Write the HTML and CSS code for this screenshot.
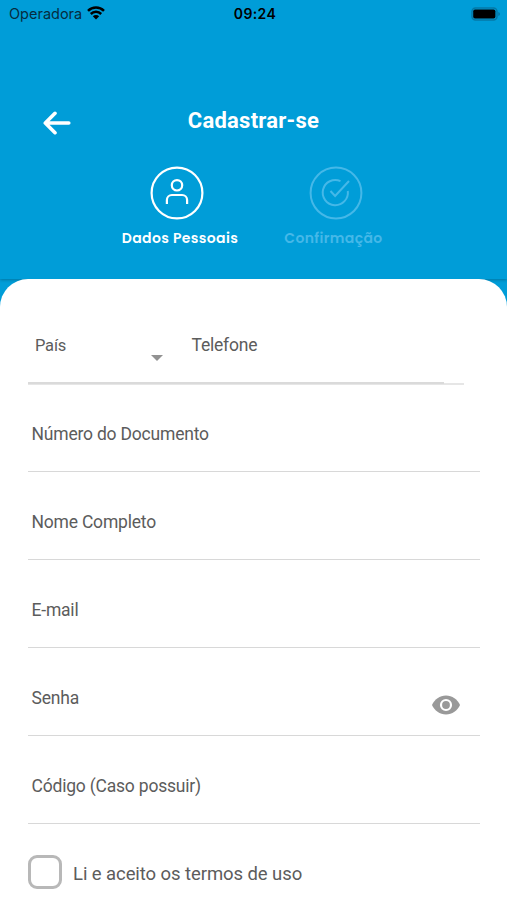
FILE: index.html
```html
<!DOCTYPE html>
<html lang="pt-BR">

<head>
  <meta charset="utf-8">
  <meta name="viewport" content="width=device-width, initial-scale=1">
  <title>Cadastrar-se</title>
  <link rel="stylesheet" href="styles.css">
</head>

<body>
  <header class="header">
    <div class="status-bar">
      <div class="carrier">
        <span class="carrier-name">Operadora</span>
        <svg class="wifi" viewBox="0 0 18 14" width="18" height="14">
          <path d="M1 4.800a11.300 11.300 0 0 1 16 0M3.800 8a7.300 7.300 0 0 1 10.400 0" fill="none" stroke="#000" stroke-width="2.500"/>
          <path d="M9 13.400L5.800 10.200a4.600 4.600 0 0 1 6.400 0z" fill="#000"/>
        </svg>
      </div>
      <span class="time">09:24</span>
      <svg class="battery" viewBox="0 0 30 14" width="30" height="14">
        <rect x="1" y="1" width="25" height="12" rx="3.500" fill="none" stroke="#0478a6" stroke-width="1.500"/>
        <rect x="2.200" y="2.500" width="22.200" height="9" rx="1.800" fill="#000"/>
        <path d="M27.500 5v4c1.600-.5 1.600-3.500 0-4z" fill="#04658d"/>
      </svg>
    </div>

    <div class="nav">
      <a class="back" href="#" aria-label="Voltar">
        <svg viewBox="0 0 28 24" width="28" height="24">
          <path d="M25.800 12H2.500M12 2.300L2.300 12l9.700 9.700" fill="none" stroke="#fff" stroke-width="3.600" stroke-linecap="round" stroke-linejoin="round"/>
        </svg>
      </a>
      <h1 class="title">Cadastrar-se</h1>
    </div>

    <div class="steps">
      <div class="step">
        <svg viewBox="0 0 54 54" width="54" height="54" fill="none" stroke="currentColor" stroke-width="2.200">
          <circle cx="27" cy="27" r="25.400"/>
          <circle cx="27" cy="19.300" r="5.200"/>
          <path d="M16.900 38v-4a5 5 0 0 1 5-5h10.200a5 5 0 0 1 5 5v4"/>
        </svg>
        <span class="step-label">Dados Pessoais</span>
      </div>
      <div class="step step-off">
        <svg viewBox="0 0 54 54" width="54" height="54" fill="none" stroke="currentColor" stroke-width="2">
          <circle cx="27" cy="27" r="25.400"/>
          <path d="M31.500 15.100A12.600 12.600 0 1 0 38.800 25"/>
          <path d="M21.500 25l4.600 5L40 15"/>
        </svg>
        <span class="step-label">Confirmação</span>
      </div>
    </div>
  </header>

  <main class="card">
    <form class="form">
      <div class="phone-row">
        <div class="phone-inner">
          <div class="country">
            <span class="country-label">País</span>
            <i class="caret"></i>
          </div>
          <span>Telefone</span>
        </div>
      </div>
      <div class="field">Número do Documento</div>
      <div class="field">Nome Completo</div>
      <div class="field">E-mail</div>
      <div class="field">
        <span>Senha</span>
        <svg class="eye" viewBox="0 0 28 20" width="28" height="20">
          <path d="M14 .5C7.800.5 2.400 4.400 0 10c2.400 5.600 7.800 9.500 14 9.500S25.600 15.600 28 10C25.600 4.400 20.200.5 14 .5z" fill="#999"/>
          <circle cx="14" cy="10" r="5" fill="#999" stroke="#fff" stroke-width="2.200"/>
        </svg>
      </div>
      <div class="field">Código (Caso possuir)</div>
      <label class="terms">
        <input class="check" type="checkbox">
        <span>Li e aceito os termos de uso</span>
      </label>
    </form>
  </main>
</body>

</html>
```
FILE: styles.css
```css
* {
  box-sizing: border-box;
}

body {
  margin: 0;
  height: 900px;
  overflow: hidden;
  background: #009dd8;
  font-family: Roboto, "Liberation Sans", sans-serif;
  color: #5c5c5c;
}

.header {
  height: 279px;
  color: #fff;
  box-shadow: 0 1px 3px rgba(0, 0, 0, 0.25);
}

.status-bar {
  display: grid;
  grid-template-columns: 1fr auto 1fr;
  align-items: center;
  height: 27px;
  padding: 0 6px 0 9px;
  font-family: Inter, sans-serif;
  font-size: 14px;
  color: #000;
}

.carrier {
  display: flex;
  align-items: center;
  gap: 5px;
}

.carrier-name {
  color: #062c40;
  font-size: 14.5px;
}

.wifi {
  margin-top: -2px;
}

.time {
  font-weight: 600;
  letter-spacing: 0.4px;
}

.battery {
  justify-self: end;
}

.nav {
  display: grid;
  grid-template-columns: 1fr auto 1fr;
  align-items: center;
  height: 56px;
  margin-top: 66px;
  padding: 0 43px;
}

.back {
  height: 24px;
  margin-top: 4px;
}

.title {
  margin: 0;
  font-size: 22px;
  line-height: 28px;
  font-weight: 700;
  letter-spacing: 0.25px;
}

.steps {
  display: flex;
  justify-content: center;
  gap: 40px;
  margin-top: 17px;
  padding-left: 6px;
}

.step {
  display: flex;
  flex-direction: column;
  align-items: center;
  width: 119px;
}

.step-off {
  color: #45b8e8;
}

.step-label {
  margin-top: 8px;
  padding-left: 6px;
  font-family: Poppins, Inter, sans-serif;
  font-size: 14px;
  line-height: 20px;
  font-weight: 600;
  letter-spacing: 0.36px;
  white-space: nowrap;
}

.step-off .step-label {
  padding: 0 5px 0 0;
}

.card {
  position: relative;
  height: 621px;
  padding: 0 27px 0 28px;
  border-radius: 28px 28px 0 0;
  background: #fff;
}

.form {
  display: flex;
  flex-direction: column;
  font-size: 17.5px;
  line-height: 22px;
  letter-spacing: -0.2px;
}

.phone-row {
  width: 436px;
  height: 106px;
  border-bottom: 2px solid #e6e6e6;
}

.phone-inner {
  display: flex;
  width: 416px;
  height: 105px;
  padding-top: 55px;
  border-bottom: 2px solid #dadada;
}

.country {
  display: flex;
  justify-content: space-between;
  width: 135px;
  margin-right: 28.5px;
  padding-left: 7px;
  font-size: 16.5px;
}

.country-label {
  margin-top: 1px;
}

.caret {
  width: 12px;
  height: 6px;
  margin-top: 21px;
  background: #929292;
  clip-path: polygon(0 0, 100% 0, 50% 100%);
}

.field {
  display: flex;
  justify-content: space-between;
  height: 88px;
  padding: 39px 20px 0 3.5px;
  border-bottom: 1px solid #d8d8d8;
}

.phone-row + .field {
  height: 87px;
  padding-top: 38px;
}

.eye {
  margin-top: 8px;
}

.terms {
  display: flex;
  align-items: center;
  gap: 11px;
  margin-top: 31px;
  font-size: 18.5px;
  letter-spacing: -0.08px;
}

.check {
  appearance: none;
  width: 34px;
  height: 34px;
  margin: 0;
  border: 3px solid #b8b8b8;
  border-radius: 9px;
}

.terms span {
  margin-top: 4px;
}
```
